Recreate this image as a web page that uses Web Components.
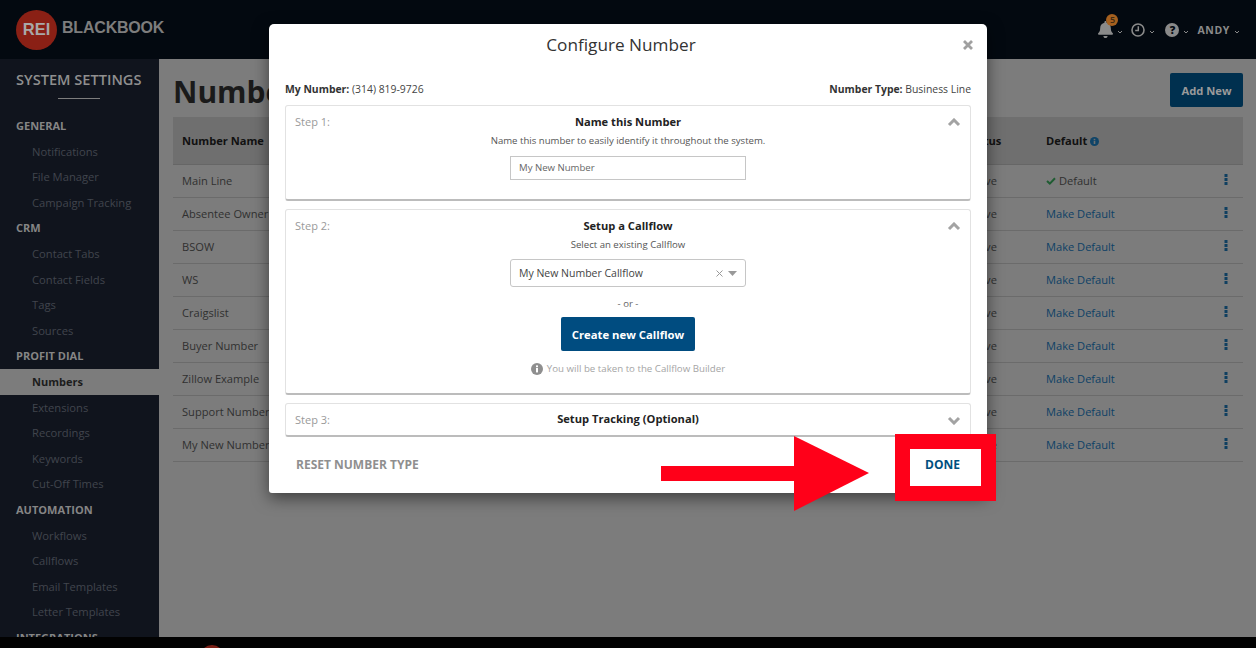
<!DOCTYPE html>
<html>
<head>
<meta charset="utf-8">
<title>Configure Number</title>
<style>
  html, body { margin: 0; height: 648px; overflow: hidden; background: #7c7c7c; }
  body { font-family: "Open Sans", "Liberation Sans", sans-serif; position: relative; }
</style>
</head>
<body>
<app-header></app-header>
<div style="display:flex;height:578px">
  <side-nav></side-nav>
  <numbers-page></numbers-page>
</div>
<app-footer></app-footer>

<config-modal>
  <step-card step="Step 1:" heading="Name this Number" open style="height:93px">
    <div class="sub">Name this number to easily identify it throughout the system.</div>
    <number-input value="My New Number"></number-input>
  </step-card>
  <step-card step="Step 2:" heading="Setup a Callflow" open style="height:183px">
    <callflow-picker></callflow-picker>
  </step-card>
  <step-card step="Step 3:" heading="Setup Tracking (Optional)" style="height:31px"></step-card>
</config-modal>
<done-callout></done-callout>

<script>
const chevron = (w, h, sw, color, up, inset = sw) => `<svg width="${w}" height="${h}" viewBox="0 0 ${w} ${h}" style="display:block"><polyline points="${inset},${up ? h - inset : inset} ${w / 2},${up ? inset : h - inset} ${w - inset},${up ? h - inset : inset}" fill="none" stroke="${color}" stroke-width="${sw}"/></svg>`;

class AppHeader extends HTMLElement {
  constructor() {
    super();
    this.attachShadow({ mode: "open" }).innerHTML = `
      <style>
        :host { display: flex; height: 59px; background: #030910; align-items: center; justify-content: space-between; }
        .logo { display: flex; align-items: center; margin-left: 16px; }
        .disc { width: 41px; height: 40px; border-radius: 50%; background: #8a2015; color: #a8a8a8; font: bold 16.5px "Liberation Sans", sans-serif; display: flex; align-items: center; justify-content: center; }
        .brand { margin-left: 5px; color: #7d7d7d; font: bold 16px "Liberation Sans", sans-serif; letter-spacing: -0.2px; position: relative; top: -2px; }
        .tools { display: flex; align-items: center; margin-right: 16px; color: #8a8a8a; }
        .bell { position: relative; width: 15px; height: 17px; }
        .badge { position: absolute; left: 8px; top: -7px; width: 12px; height: 12px; border-radius: 50%; background: #a5601f; color: #3c2a12; font: 600 9px/12px "Open Sans", sans-serif; text-align: center; }
        .caret { margin: 5px 10px 0 4px; }
        .tight { margin-right: 8px; }
        .q { width: 14px; height: 14px; border-radius: 50%; background: #8a8a8a; color: #030910; font: 800 11px/14px "Open Sans", sans-serif; text-align: center; }
        .name { font-size: 10.5px; font-weight: 700; letter-spacing: 0.6px; }
        .last { margin-right: 0; }
      </style>
      <div class="logo"><div class="disc">REI</div><div class="brand">BLACKBOOK</div></div>
      <div class="tools">
        <div class="bell">
          <svg width="15" height="17" viewBox="0 0 448 512" style="display:block"><path fill="#8a8a8a" d="M224 512c35.32 0 63.97-28.65 63.97-64H160.03c0 35.35 28.65 64 63.97 64zm215.39-149.71c-19.32-20.76-55.47-51.99-55.47-154.29 0-77.7-54.48-139.9-127.94-155.16V32c0-17.67-14.32-32-31.98-32s-31.98 14.33-31.98 32v20.84C118.56 68.1 64.08 130.3 64.08 208c0 102.3-36.15 133.53-55.47 154.29-6 6.45-8.66 14.16-8.61 21.71.11 16.4 12.98 32 32.1 32h383.8c19.12 0 32-15.6 32.1-32 .05-7.55-2.61-15.27-8.61-21.71z"/></svg>
          <div class="badge">5</div>
        </div>
        <span class="caret tight">${chevron(6, 4, 1, "#8a8a8a")}</span>
        <svg width="14" height="14" viewBox="0 0 14 14"><circle cx="7" cy="7" r="6" fill="none" stroke="#8a8a8a" stroke-width="1.6"/><polyline points="7.3,3.2 7.3,7.4 4.2,7.4" fill="none" stroke="#8a8a8a" stroke-width="1.5"/></svg>
        <span class="caret">${chevron(6, 4, 1, "#8a8a8a")}</span>
        <div class="q">?</div>
        <span class="caret tight">${chevron(6, 4, 1, "#8a8a8a")}</span>
        <span class="name">ANDY</span>
        <span class="caret last">${chevron(6, 4, 1, "#8a8a8a")}</span>
      </div>`;
  }
}

class SideNav extends HTMLElement {
  constructor() {
    super();
    const groups = [
      ["GENERAL", ["Notifications", "File Manager", "Campaign Tracking"]],
      ["CRM", ["Contact Tabs", "Contact Fields", "Tags", "Sources"]],
      ["PROFIT DIAL", ["Numbers", "Extensions", "Recordings", "Keywords", "Cut-Off Times"]],
      ["AUTOMATION", ["Workflows", "Callflows", "Email Templates", "Letter Templates"]],
      ["INTEGRATIONS", []],
    ];
    const rows = groups.map(([title, items]) =>
      `<div class="group">${title}</div>` +
      items.map((i) => `<div class="item${i === "Numbers" ? " active" : ""}">${i}</div>`).join("")
    ).join("");
    this.attachShadow({ mode: "open" }).innerHTML = `
      <style>
        :host { display: block; width: 159px; flex: none; background: #10141d; overflow: hidden; }
        h2 { margin: 0; padding: 11px 0 0 16px; font-size: 14.6px; line-height: 18px; font-weight: 600; color: #8f8f8f; white-space: nowrap; }
        hr { width: 42px; height: 1px; margin: 10px 0 14px 58px; border: 0; background: #7d7d7d; }
        .group, .item { height: 25.6px; line-height: 25.6px; white-space: nowrap; }
        .group { padding-left: 16px; font-size: 11px; font-weight: 700; color: #858585; }
        .item { padding-left: 32px; font-size: 11.2px; color: #41454d; }
        .active { background: #7c7c7c; color: #1c1c1c; font-weight: 700; font-size: 11px; }
      </style>
      <h2>SYSTEM SETTINGS</h2><hr>${rows}`;
  }
}

class NumbersPage extends HTMLElement {
  constructor() {
    super();
    const names = ["Main Line", "Absentee Owner", "BSOW", "WS", "Craigslist", "Buyer Number", "Zillow Example", "Support Number", "My New Number"];
    const kebab = `<svg width="4" height="11" viewBox="0 0 4 11"><rect x="0.5" y="0" width="3" height="3" fill="#0f3f60"/><rect x="0.5" y="4" width="3" height="3" fill="#0f3f60"/><rect x="0.5" y="8" width="3" height="3" fill="#0f3f60"/></svg>`;
    const rows = names.map((n, i) => `
      <div class="row">
        <span class="name">${n}</span>
        <span>Active</span>
        ${i === 0
          ? `<span><svg width="10" height="8" viewBox="0 0 10 8"><polyline points="1,4 3.8,6.6 9,1.2" fill="none" stroke="#1f5c32" stroke-width="2"/></svg> Default</span>`
          : `<span class="link">Make Default</span>`}
        <span>${kebab}</span>
      </div>`).join("");
    this.attachShadow({ mode: "open" }).innerHTML = `
      <style>
        :host { display: block; flex: 1; padding: 14px 13px 0 14px; background: #7c7c7c; color: #303030; font-size: 11.1px; }
        .top { display: flex; justify-content: space-between; height: 44px; }
        h1 { margin: 0; font-size: 30px; line-height: 38px; font-weight: 700; color: #1a1a1a; }
        button { width: 73px; height: 34px; border: 0; border-radius: 2px; background: #00304f; color: #9a9a9a; font: 700 11.2px "Open Sans", sans-serif; }
        .row, .head { display: grid; grid-template-columns: 784px 80px 178px 1fr; padding-left: 9px; align-items: center; }
        .head { height: 48px; background: #6f6f6f; color: #111; font-weight: 700; border-bottom: 1px solid #666; box-sizing: border-box; }
        .row { height: 33px; border-bottom: 1px solid #6b6b6b; box-sizing: border-box; padding-bottom: 2px; }
        .link { color: #0e4166; }
        .info { display: inline-block; width: 9px; height: 9px; vertical-align: -1px; }
      </style>
      <div class="top"><h1>Numbers</h1><button>Add New</button></div>
      <div class="head">
        <span>Number Name</span><span>Status</span>
        <span>Default <svg class="info" viewBox="0 0 10 10"><circle cx="5" cy="5" r="5" fill="#0f4468"/><rect x="4.1" y="4.2" width="1.8" height="3.6" fill="#6f6f6f"/><rect x="4.1" y="2" width="1.8" height="1.5" fill="#6f6f6f"/></svg></span>
        <span></span>
      </div>
      ${rows}`;
  }
}

class AppFooter extends HTMLElement {
  constructor() {
    super();
    this.attachShadow({ mode: "open" }).innerHTML = `
      <style>
        :host { display: block; height: 11px; background: #020202; overflow: hidden; padding-left: 200px; }
        div { width: 24px; height: 24px; margin-top: 8px; border-radius: 50%; background: #7c2016; }
      </style><div></div>`;
  }
}

// the dialog sits over the page, so it is the one thing placed by coordinates
class ConfigModal extends HTMLElement {
  constructor() {
    super();
    this.attachShadow({ mode: "open" }).innerHTML = `
      <style>
        :host { position: absolute; left: 269px; top: 24px; width: 718px; height: 469px; box-sizing: border-box; padding: 0 16px; background: #fff; border-radius: 5px 5px 3px 3px; box-shadow: 0 5px 16px rgba(0,0,0,.5); display: flex; flex-direction: column; color: #333; font-size: 11px; }
        .title { height: 42px; margin: 0 -16px; padding: 0 14px 2px 0; box-sizing: border-box; display: flex; align-items: center; justify-content: center; font-size: 17.2px; color: #333; position: relative; }
        .x { position: absolute; right: 13px; top: 15px; }
        .meta { display: flex; justify-content: space-between; margin-top: 16px; line-height: 15px; height: 23px; color: #444; font-size: 10.4px; }
        b { color: #333; }
        .steps { display: flex; flex-direction: column; gap: 8px; }
        .foot { display: flex; justify-content: space-between; padding: 19px 11px 0; font-size: 12px; font-weight: 700; }
        .reset { color: #8f8f8f; }
        .done { color: #00507f; }
      </style>
      <div class="title">Configure Number
        <svg class="x" width="12" height="12" viewBox="0 0 12 12"><path d="M2 2 10 10M10 2 2 10" stroke="#a0a0a0" stroke-width="2.8"/></svg>
      </div>
      <div class="meta"><span><b>My Number:</b> (314) 819-9726</span><span><b>Number Type:</b> Business Line</span></div>
      <div class="steps"><slot></slot></div>
      <div class="foot"><span class="reset">RESET NUMBER TYPE</span><span class="done">DONE</span></div>`;
  }
}

class StepCard extends HTMLElement {
  constructor() {
    super();
    const open = this.hasAttribute("open");
    this.attachShadow({ mode: "open" }).innerHTML = `
      <style>
        :host { display: grid; grid-template-columns: 1fr auto 1fr; border: 1px solid #e2e2e2; border-bottom: 2px solid #bcbcbc; border-radius: 3px; padding: 0 9px; }
        .step { color: #9a9a9a; padding-top: 8px; line-height: 15px; }
        .mid { text-align: center; padding-top: ${open ? 8 : 7}px; }
        h3 { margin: 0; font-size: 11.15px; line-height: 15px; font-weight: 700; color: #222; }
        .arrow { justify-self: end; padding-top: 12px; }
        ::slotted(.sub) { margin-top: 4px; font-size: 9.6px; line-height: 15px; color: #555; }
      </style>
      <div class="step">${this.getAttribute("step")}</div>
      <div class="mid"><h3>${this.getAttribute("heading")}</h3><slot></slot></div>
      <div class="arrow">${chevron(14, 9, 3, "#a3a3a3", open, 2)}</div>`;
  }
}

class NumberInput extends HTMLElement {
  constructor() {
    super();
    this.attachShadow({ mode: "open" }).innerHTML = `
      <style>
        :host { display: block; width: 236px; height: 24px; box-sizing: border-box; margin: 8px auto 0; padding-left: 8px; border: 1px solid #c6c6c6; font-size: 9.6px; line-height: 22px; color: #666; text-align: left; }
      </style>${this.getAttribute("value")}`;
  }
}

class CallflowPicker extends HTMLElement {
  constructor() {
    super();
    this.attachShadow({ mode: "open" }).innerHTML = `
      <style>
        :host { display: flex; flex-direction: column; align-items: center; width: 236px; }
        .sub { margin-top: 4px; font-size: 9.6px; line-height: 15px; color: #555; }
        .select { width: 236px; height: 28px; box-sizing: border-box; margin-top: 7px; padding: 0 8px; border: 1px solid #c6c6c6; border-radius: 3px; display: flex; align-items: center; justify-content: space-between; font-size: 10.5px; color: #444; }
        .ctl { display: flex; align-items: center; gap: 5px; }
        .or { margin-top: 9px; font-size: 9.6px; line-height: 15px; color: #666; }
        button { width: 134px; height: 34px; margin-top: 6px; border: 0; border-radius: 2px; background: #004c80; color: #fff; font: 700 11.3px "Open Sans", sans-serif; }
        .note { margin-top: 10px; font-size: 9.7px; line-height: 15px; color: #a5a5a5; display: flex; align-items: center; gap: 4px; white-space: nowrap; }
      </style>
      <div class="sub">Select an existing Callflow</div>
      <div class="select"><span>My New Number Callflow</span>
        <span class="ctl">
          <svg width="7" height="7" viewBox="0 0 7 7"><path d="M.5.5 6.5 6.5M6.5.5.5 6.5" stroke="#999" stroke-width="1"/></svg>
          <svg width="9" height="5" viewBox="0 0 9 5"><polygon points="0,0 9,0 4.5,5" fill="#999"/></svg>
        </span>
      </div>
      <div class="or">- or -</div>
      <button>Create new Callflow</button>
      <div class="note">
        <svg width="12" height="12" viewBox="0 0 12 12"><circle cx="6" cy="6" r="6" fill="#8f8f8f"/><rect x="5" y="5" width="2" height="4.4" fill="#fff"/><rect x="5" y="2.4" width="2" height="1.8" fill="#fff"/></svg>
        You will be taken to the Callflow Builder
      </div>`;
  }
}

// red annotation drawn on top of the screenshot: an arrow and a frame round DONE
class DoneCallout extends HTMLElement {
  constructor() {
    super();
    this.attachShadow({ mode: "open" }).innerHTML = `
      <style>
        :host { position: absolute; left: 661px; top: 434px; width: 335px; height: 77px; }
        svg { position: absolute; left: 0; top: 0; }
        .box { position: absolute; left: 234px; top: 0; width: 101px; height: 67px; box-sizing: border-box; border: 15px solid #ff0019; }
      </style>
      <svg width="210" height="77" viewBox="0 0 210 77"><rect x="0" y="32" width="134" height="15" fill="#ff0019"/><polygon points="133,2 208,39 133,77" fill="#ff0019"/></svg>
      <div class="box"></div>`;
  }
}

customElements.define("app-header", AppHeader);
customElements.define("side-nav", SideNav);
customElements.define("numbers-page", NumbersPage);
customElements.define("app-footer", AppFooter);
customElements.define("config-modal", ConfigModal);
customElements.define("step-card", StepCard);
customElements.define("number-input", NumberInput);
customElements.define("callflow-picker", CallflowPicker);
customElements.define("done-callout", DoneCallout);
</script>
</body>
</html>
